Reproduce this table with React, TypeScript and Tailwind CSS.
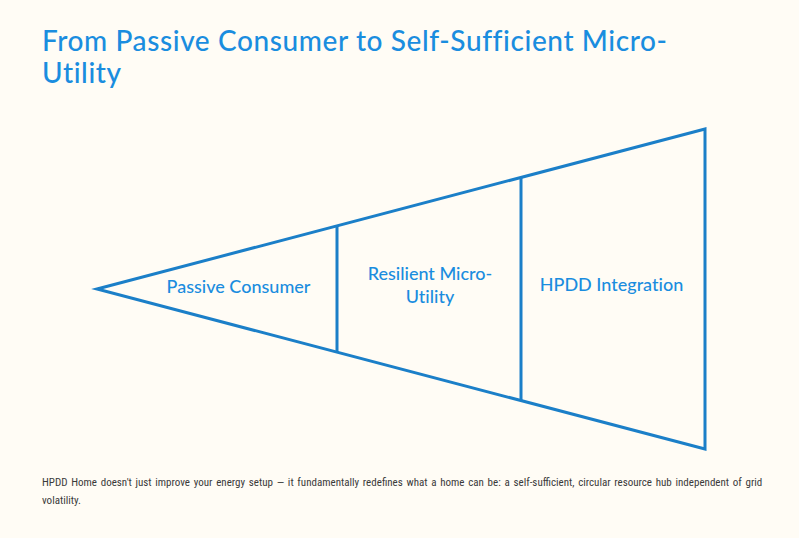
const App = () => {
  const blue = '#1b7fc8';

  return (
    <div className="min-h-screen w-full bg-[#fffcf5] flex flex-col">
      <h1 className="px-[42px] pt-[24px] font-['Lato','Noto_Sans',sans-serif] text-[28px] leading-[32px] tracking-[0.6px] font-medium text-[#1a8ddf] [font-variant-ligatures:none]">
        From Passive Consumer to Self-Sufficient Micro-
        <br />
        Utility
      </h1>

      <svg
        className="block mt-[12px] font-['Lato','Noto_Sans',sans-serif] [font-variant-ligatures:none]"
        width="799"
        height="374"
        viewBox="0 100 799 374"
        fill="none"
      >
        <polygon points="97,289 705,129 705,449" stroke={blue} strokeWidth="3" />
        <line x1="337" y1="226" x2="337" y2="352" stroke={blue} strokeWidth="3" />
        <line x1="521" y1="177.5" x2="521" y2="400.5" stroke={blue} strokeWidth="3" />
        <g fill="#1a8ddf" fontSize="18" fontWeight="500" textAnchor="middle">
          <text x="238.5" y="293">Passive Consumer</text>
          <text x="430" y="280">Resilient Micro-</text>
          <text x="430" y="302.5">Utility</text>
          <text x="611.5" y="290.5">HPDD Integration</text>
        </g>
      </svg>

      <p className="pl-[42px] pr-[30px] font-['Liberation_Sans_Narrow','Roboto_Condensed',sans-serif] text-[11px] leading-[18px] [word-spacing:1.2px] text-[#3a3a3a]">
        HPDD Home doesn't just improve your energy setup — it fundamentally redefines what a home can be: a
        self-sufficient, circular resource hub independent of grid volatility.
      </p>
    </div>
  );
};

export default App;
